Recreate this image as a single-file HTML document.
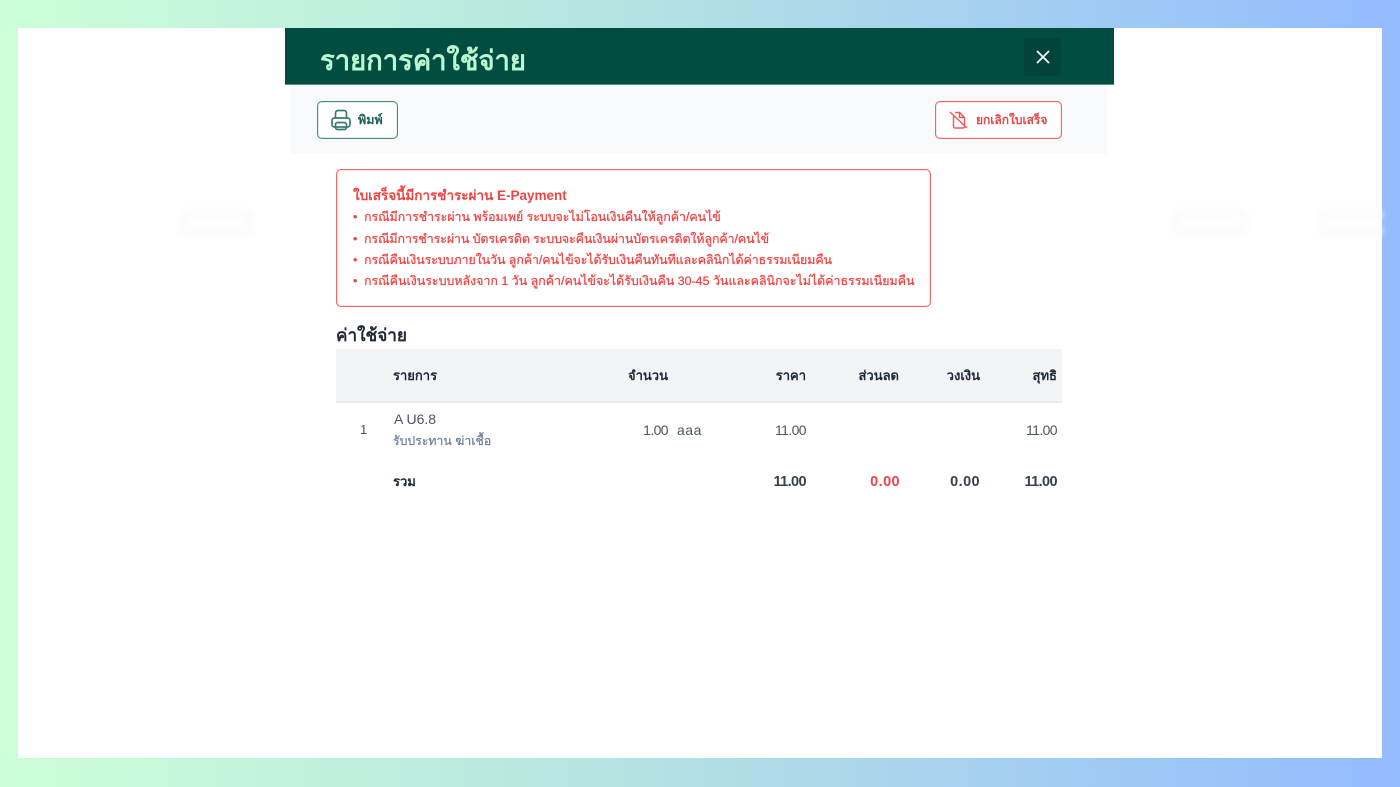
<!DOCTYPE html>
<html lang="th"><head><meta charset="utf-8"><title>รายการค่าใช้จ่าย</title>
<style>
*{box-sizing:border-box;margin:0;padding:0}
html,body{width:1400px;height:787px;overflow:hidden}
body{position:relative;background:linear-gradient(90deg,#ccffd8 0%,#b7e6e0 40%,#93bbff 100%);font-family:"Liberation Sans","Noto Sans CJK SC",sans-serif;color:#111827}
#w{position:absolute;left:0;top:0;width:1400px;height:787px;filter:blur(.35px)}
.a{position:absolute;white-space:nowrap}
.r{text-align:right}
.ghost{position:absolute;top:209px;height:27px;border:9px solid #fcfcfd;border-radius:5px;filter:blur(3px)}
.al{left:364px;font-size:12.4px;line-height:18px;color:#ef4444;-webkit-text-stroke:.25px #ef4444}
.b{left:353px;font-size:12.4px;line-height:18px;color:#ef4444;font-weight:700}
.h{top:367px;font-size:13px;line-height:18px;font-weight:700;color:#1f2937}
.n{top:421px;font-size:14px;line-height:18px;color:#4b5563;letter-spacing:-.6px}
.t{top:473px;font-size:14.500px;line-height:18px;font-weight:700;color:#374151;letter-spacing:-.6px}
.bd{border-radius:5px;background:#fff}
</style></head><body><div id="w">
<div class="a" style="left:18px;top:28px;width:1364px;height:730px;background:#fff"></div>
<div class="ghost" style="left:178px;width:76px"></div>
<div class="ghost" style="left:1172px;width:76px"></div>
<div class="ghost" style="left:1317px;width:65px;border-right:0"></div>
<div class="a" style="left:291px;top:85px;width:816px;height:69px;background:#f9fafb"></div>
<div class="a" style="left:285px;top:28px;width:829px;height:57px;background:#014d40;border-bottom:1px solid #5f8f88"></div>
<div class="a" style="left:320px;top:41px;font-size:27.400px;line-height:40px;font-weight:700;color:#bbf7d0">รายการค่าใช้จ่าย</div>
<div class="a" style="left:1024px;top:38px;width:37px;height:38px;background:#03443a;border-radius:4px"></div>
<svg class="a" style="left:1035px;top:49px" width="16" height="16" viewBox="0 0 16 16"><path d="M2 2L14 14M14 2L2 14" stroke="#fff" stroke-width="1.800" fill="none"/></svg>

<div class="a bd" style="left:317px;top:101px;width:81px;height:38px;border:1px solid #4d8a80;box-shadow:inset 0 0 1px #4d8a80"></div>
<svg class="a" style="left:330px;top:109px" width="22" height="22" viewBox="0 0 22 22" fill="none" stroke="#3b7a70" stroke-width="1.700"><path d="M5.500 9V4a2.500 2.500 0 0 1 2.500-2.500h6A2.500 2.500 0 0 1 16.500 4V9"/><rect x="2" y="9" width="18" height="9" rx="2.500"/><rect x="5.500" y="13.500" width="11" height="7" rx="2"/></svg>
<div class="a" style="left:358px;top:111px;font-size:12.500px;line-height:18px;font-weight:700;color:#1f5f55">พิมพ์</div>

<div class="a bd" style="left:935px;top:101px;width:127px;height:38px;border:1px solid #ee6666;box-shadow:inset 0 0 1px #ee6666"></div>
<svg class="a" style="left:948px;top:110px" width="20" height="20" viewBox="0 0 20 20" fill="none" stroke="#e85a5a" stroke-width="1.400"><path d="M5.500 6V16.500A1.500 1.500 0 0 0 7 18H15A1.500 1.500 0 0 0 16.500 16.500V7.500L11.500 2.500H7"/><path d="M11.500 2.500V7.500H16.500"/><path d="M2 2L19 18" stroke-width="1.500"/></svg>
<div class="a" style="left:976px;top:111px;font-size:12px;line-height:18px;font-weight:700;color:#e5484d">ยกเลิกใบเสร็จ</div>

<div class="a" style="left:336px;top:169px;width:595px;height:138px;border:1px solid #ee6666;border-radius:5px;box-shadow:inset 0 0 1px #ee6666"></div>
<div class="a" style="left:353px;top:187px;font-size:13.500px;line-height:18px;font-weight:700;color:#ef4444">ใบเสร็จนี้มีการชำระผ่าน E-Payment</div>
<div class="a b" style="top:208px">•</div><div class="a al" style="top:208px;letter-spacing:-.03px">กรณีมีการชำระผ่าน พร้อมเพย์ ระบบจะไม่โอนเงินคืนให้ลูกค้า/คนไข้</div>
<div class="a b" style="top:230px">•</div><div class="a al" style="top:230px;letter-spacing:-.08px">กรณีมีการชำระผ่าน บัตรเครดิต ระบบจะคืนเงินผ่านบัตรเครดิตให้ลูกค้า/คนไข้</div>
<div class="a b" style="top:251px">•</div><div class="a al" style="top:251px;letter-spacing:-.06px">กรณีคืนเงินระบบภายในวัน ลูกค้า/คนไข้จะได้รับเงินคืนทันทีและคลินิกได้ค่าธรรมเนียมคืน</div>
<div class="a b" style="top:272px">•</div><div class="a al" style="top:272px;letter-spacing:.01px">กรณีคืนเงินระบบหลังจาก 1 วัน ลูกค้า/คนไข้จะได้รับเงินคืน 30-45 วันและคลินิกจะไม่ได้ค่าธรรมเนียมคืน</div>

<div class="a" style="left:336px;top:323px;font-size:17.200px;line-height:24px;font-weight:700;color:#1f2937">ค่าใช้จ่าย</div>
<div class="a" style="left:336px;top:349px;width:726px;height:54px;background:#f3f4f6;border-bottom:2px solid #e8e9ec"></div>

<div class="a h" style="left:393px">รายการ</div>
<div class="a r h" style="right:732px">จำนวน</div>
<div class="a r h" style="right:594px">ราคา</div>
<div class="a r h" style="right:501px">ส่วนลด</div>
<div class="a r h" style="right:420px">วงเงิน</div>
<div class="a r h" style="right:343px">สุทธิ</div>

<div class="a" style="left:360px;top:421px;font-size:13px;line-height:18px;color:#4b5563">1</div>
<div class="a" style="left:394px;top:410px;font-size:14px;line-height:18px;color:#4b5563">A U6.8</div>
<div class="a" style="left:393px;top:432px;font-size:12.300px;line-height:18px;color:#6b7c99;-webkit-text-stroke:.2px #6b7c99">รับประทาน ฆ่าเชื้อ</div>
<div class="a r n" style="right:732px">1.00</div>
<div class="a" style="left:677px;top:421px;font-size:14px;line-height:18px;color:#4b5563;letter-spacing:.5px">aaa</div>
<div class="a r n" style="right:594px">11.00</div>
<div class="a r n" style="right:343px">11.00</div>

<div class="a" style="left:393px;top:473px;font-size:13px;line-height:18px;font-weight:700;color:#1f2937">รวม</div>
<div class="a r t" style="right:594px">11.00</div>
<div class="a r t" style="right:500px;color:#ef4444;letter-spacing:.4px">0.00</div>
<div class="a r t" style="right:420px;letter-spacing:.4px">0.00</div>
<div class="a r t" style="right:343px">11.00</div>
</div></body></html>
